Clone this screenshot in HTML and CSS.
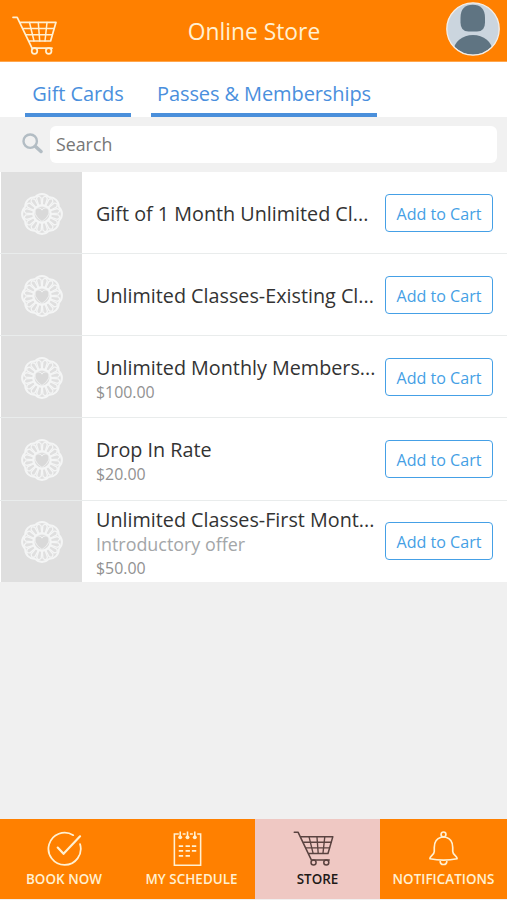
FILE: index.html
```html
<!DOCTYPE html>
<html lang="en">
<head>
<meta charset="utf-8">
<title>Online Store</title>
<link rel="stylesheet" href="styles.css">
</head>
<body>
<svg class="defs" aria-hidden="true">
  <symbol id="cart" viewBox="0 0 46 39">
    <g fill="none" stroke="currentColor" stroke-linecap="round" stroke-linejoin="round">
      <path stroke-width="1.7" d="M1 1.3h4.2L20 32.2M8.500 6.300H44L38.600 25H17M20 32.200h20"/>
      <path stroke-width="1.500" d="M11.500 12.500h30.700M14.300 18.800h26M17.500 6.500L22 25M26.300 6.500l1.400 18.500M35 6.500l-2 18.500"/>
      <circle stroke-width="1.700" cx="22.500" cy="35" r="2.800"/>
      <circle stroke-width="1.700" cx="36.700" cy="35" r="2.800"/>
    </g>
  </symbol>
  <symbol id="medal" viewBox="-21 -21 42 42">
    <g fill="none" stroke="#f4f5f5">
      <g id="lobes">
        <path id="lobe" stroke-width="2" d="M-6.900 -16.700A9 9 0 0 1 6.900 -16.700"/>
        <use href="#lobe" transform="rotate(45)"/>
        <use href="#lobe" transform="rotate(90)"/>
        <use href="#lobe" transform="rotate(135)"/>
      </g>
      <use href="#lobes" transform="rotate(180)"/>
      <g id="loops" stroke-width="1.300" transform="rotate(11)">
        <path id="loop" d="M-1.500 -9L-2.300 -16Q0 -20 2.300 -16L1.500 -9"/>
        <use href="#loop" transform="rotate(22.500)"/>
        <use href="#loop" transform="rotate(45)"/>
        <use href="#loop" transform="rotate(67.500)"/>
        <use href="#loop" transform="rotate(90)"/>
        <use href="#loop" transform="rotate(112.500)"/>
        <use href="#loop" transform="rotate(135)"/>
        <use href="#loop" transform="rotate(157.500)"/>
      </g>
      <use href="#loops" transform="rotate(180)"/>
      <circle r="8.700" stroke-width="2.400"/>
    </g>
    <path fill="#d9d9d9" stroke="#f1f2f2" stroke-width="1" d="M0 7.500C-3 5-7 2-7 -2C-7 -6.500-2 -7.500 0 -3.800C2 -7.500 7 -6.500 7 -2C7 2 3 5 0 7.500Z"/>
  </symbol>
</svg>
<div class="app">
  <header class="header">
    <svg class="header-cart"><use href="#cart"/></svg>
    <h1 class="title">Online Store</h1>
    <svg class="avatar" viewBox="0 0 54 54">
      <defs><clipPath id="face"><circle cx="27" cy="27" r="25.700"/></clipPath></defs>
      <circle cx="27" cy="27" r="26.300" fill="#cbd5de"/>
      <g clip-path="url(#face)" fill="#5f7482">
        <path d="M14.500 16C14.500 7 19 2.800 26.700 2.800S39 7 39 16v4.500Q39 29.500 31 29.500h-8.500Q14.500 29.500 14.500 20.500Z"/>
        <ellipse cx="27" cy="49" rx="19.500" ry="16"/>
      </g>
      <circle cx="27" cy="27" r="26.200" fill="none" stroke="#f5eee6" stroke-width="1.300"/>
    </svg>
  </header>
  <nav class="tabs">
    <a class="tab tab-gifts"><span>Gift Cards</span></a>
    <a class="tab tab-passes"><span>Passes &amp; Memberships</span></a>
  </nav>
  <div class="search">
    <svg class="search-icon" viewBox="0 0 21 21" fill="none" stroke="#b3bdc4">
      <circle cx="8.200" cy="8.200" r="6.700" stroke-width="2.400"/>
      <path d="M13.500 13.500l5.500 5" stroke-width="3.500" stroke-linecap="round"/>
    </svg>
    <div class="field"><span>Search</span></div>
  </div>
  <main class="list">
    <div class="row">
      <div class="thumb"><svg><use href="#medal"/></svg></div>
      <div class="info"><div class="name">Gift of 1 Month Unlimited Cl...</div></div>
      <button class="add"><span>Add to Cart</span></button>
    </div>
    <div class="row">
      <div class="thumb"><svg><use href="#medal"/></svg></div>
      <div class="info"><div class="name">Unlimited Classes-Existing Cl...</div></div>
      <button class="add"><span>Add to Cart</span></button>
    </div>
    <div class="row">
      <div class="thumb"><svg><use href="#medal"/></svg></div>
      <div class="info detailed"><div class="name">Unlimited Monthly Members...</div><div class="price">$100.00</div></div>
      <button class="add"><span>Add to Cart</span></button>
    </div>
    <div class="row">
      <div class="thumb"><svg><use href="#medal"/></svg></div>
      <div class="info detailed"><div class="name">Drop In Rate</div><div class="price">$20.00</div></div>
      <button class="add"><span>Add to Cart</span></button>
    </div>
    <div class="row">
      <div class="thumb"><svg><use href="#medal"/></svg></div>
      <div class="info full"><div class="name">Unlimited Classes-First Mont...</div><div class="note">Introductory offer</div><div class="price">$50.00</div></div>
      <button class="add"><span>Add to Cart</span></button>
    </div>
  </main>
  <footer class="bar">
    <a class="item">
      <svg class="icon" viewBox="0 0 36 36" fill="none" stroke="currentColor" stroke-width="1.800" stroke-linecap="round" stroke-linejoin="round">
        <path d="M27 4.300A16.600 16.600 0 1 0 34 13.500"/><path stroke-width="2.200" d="M11 17l6 6.500L34 5.500"/>
      </svg>
      <span>BOOK NOW</span>
    </a>
    <a class="item">
      <svg class="icon icon-pad" viewBox="0 0 36 36" fill="none" stroke="currentColor" stroke-width="1.600">
        <path d="M9 3H4.500v32.200h27V3h-3.500M13 3h3M20.500 3h3"/>
        <path stroke-width="1.600" d="M10.500 0.500v6M18 0.500v6M25.500 0.500v6"/>
        <g fill="currentColor" stroke="none"><circle cx="10.500" cy="6.500" r="2"/><circle cx="18" cy="6.500" r="2"/><circle cx="25.500" cy="6.500" r="2"/></g>
        <path stroke-width="1.800" d="M9 15.500h4.500M16 15.500h4.500M22.500 15.500H27M9 20.500h4.500M16 20.500h4.500M22.500 20.500H27M9 25.500h4.500M16 25.500h4.500"/>
      </svg>
      <span>MY SCHEDULE</span>
    </a>
    <a class="item active">
      <svg class="icon icon-cart"><use href="#cart"/></svg>
      <span>STORE</span>
    </a>
    <a class="item">
      <svg class="icon" viewBox="0 0 36 36" fill="none" stroke="currentColor" stroke-width="1.700" stroke-linecap="round" stroke-linejoin="round">
        <circle cx="18" cy="3.500" r="2.500"/>
        <path d="M15.500 6.500C10 8 8.500 12 8.500 17v4C8.500 24.500 4 25.500 4 28.500Q18 31.500 32 28.500C32 25.500 27.500 24.500 27.500 21v-4C27.500 12 26 8 20.500 6.500Q18 5.500 15.500 6.500M14.500 30C14.500 36 21.500 36 21.500 30"/>
      </svg>
      <span>NOTIFICATIONS</span>
    </a>
  </footer>
</div>
</body>
</html>
```
FILE: styles.css
```css
* { box-sizing: border-box; }
body { margin: 0; font-family: "Open Sans", "Noto Sans", sans-serif; background: #f0f0f0; }
.defs { position: absolute; width: 0; height: 0; }
.app { display: flex; flex-direction: column; width: 507px; height: 900px; overflow: hidden; }
.header { flex: none; display: flex; align-items: flex-start; justify-content: space-between; height: 62px; padding: 2px 7px 0 12px; background: #ff8000; color: #fff0d2; border-bottom: 1px solid #ffa64d; }
.header-cart { width: 46px; height: 39px; margin-top: 14px; }
.title { margin: 0 0 0 4px; font-size: 22.8px; line-height: 60px; font-weight: 400; white-space: nowrap; }
.avatar { width: 54px; height: 54px; }
.tabs { flex: none; display: flex; gap: 20px; height: 55px; padding-left: 25px; background: #fff; }
.tab { display: flex; justify-content: center; padding-top: 17px; border-bottom: 4px solid #4a8fdb; color: #4a8fdd; font-size: 20px; line-height: 30px; letter-spacing: -0.1px; white-space: nowrap; }
.tab-gifts { width: 106px; }
.tab-passes { width: 226px; }
.search { flex: none; display: flex; height: 55px; padding: 9px 10px 9px 22px; background: #f1f1f1; }
.search-icon { width: 21px; height: 21px; margin: 7px 7px 0 0; }
.field { flex: 1; padding-left: 6px; border-radius: 6px; background: #fff; color: #777; font-size: 17.8px; line-height: 37px; }
.list { flex: none; }
.row { display: flex; align-items: center; height: 82.15px; padding: 0 14px 0 1px; background: #fff; border-bottom: 1px solid #e9ecec; }
.row:last-child { border-color: #f0f0f0; }
.thumb { display: flex; align-items: center; justify-content: center; flex: none; width: 81px; height: 100%; background: #dfdfdf; }
.thumb svg { width: 42px; height: 42px; margin-top: 2px; }
.info { width: 290px; flex: none; padding: 3px 0 0 14px; white-space: nowrap; }
.detailed { padding-top: 6px; }
.full { padding-top: 5px; }
.name { font-size: 19.75px; line-height: 24px; color: #333; }
.note { font-size: 17.9px; line-height: 25px; color: #a3a6a8; }
.price { font-size: 15.9px; line-height: 22px; color: #919191; }
.name + .price { line-height: 24px; }
.add { flex: none; width: 108px; height: 38px; margin-left: 13px; padding: 0; border: 1.5px solid #45a0e6; border-radius: 4px; background: #fff; color: #459fe5; font: 16.1px/36px "Open Sans", sans-serif; white-space: nowrap; }
.add span { display: block; padding-top: 1px; }
.bar { flex: none; display: grid; grid-template-columns: 128px 127px 125px 127px; height: 80px; margin-top: auto; margin-bottom: 1px; background: #ff8000; }
.item { display: flex; flex-direction: column; align-items: center; padding-top: 12px; color: #fff0d2; font-size: 13.4px; line-height: 18px; font-weight: 600; letter-spacing: 0.05px; white-space: nowrap; }
.icon { width: 35px; height: 35px; margin-bottom: 4px; }
.icon-pad { margin-right: 8px; }
.icon-cart { width: 42px; color: #5a4340; margin-right: 8px; }
.active { background: #efc8c3; color: #211917; }
```
